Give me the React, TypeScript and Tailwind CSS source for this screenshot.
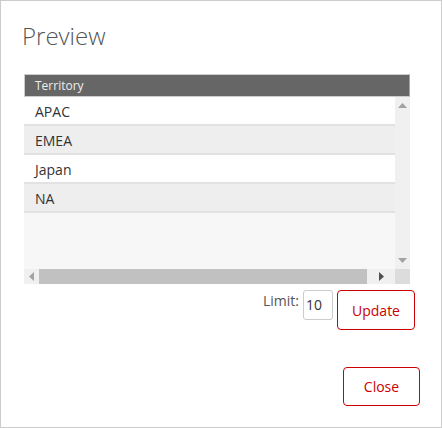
import React from "react";

const rows = ["APAC", "EMEA", "Japan", "NA"];

export default function App() {
  return (
    <div
      className="w-[442px] h-[428px] border border-[#cccccc] bg-white flex flex-col"
      style={{ fontFamily: '"Open Sans", "Liberation Sans", sans-serif' }}
    >
      <div className="pl-[21px] pt-[20px] h-[73px] text-[24px] font-light leading-[30px] text-[#555555]">
        Preview
      </div>
      <div className="ml-[23px] w-[386px] flex flex-col">
        <div className="h-[23px] bg-[#666666] border border-[#cccccc] border-r-[#8fa9c4] pl-[10px] text-[12px] leading-[22px] text-[#eeeeee]">
          Territory
        </div>
        <div className="flex h-[172px]">
          <div className="flex-1 bg-[#f7f7f7] flex flex-col">
            {rows.map((r, i) => (
              <div
                key={r}
                className={`h-[29px] border-b-2 border-[#e2e2e2] pl-[11px] pt-[1px] text-[14px] leading-[27px] text-[#333333] ${
                  i % 2 === 0 ? "bg-white" : "bg-[#eeeeee]"
                }`}
              >
                {r}
              </div>
            ))}
          </div>
          <div className="w-[15px] bg-[#f0f0f0] flex flex-col items-center justify-between py-[6px]">
            <svg width="9" height="5" viewBox="0 0 9 5">
              <polygon points="0,5 9,5 4.5,0" fill="#a3a3a3" />
            </svg>
            <svg width="9" height="5" viewBox="0 0 9 5">
              <polygon points="0,0 9,0 4.5,5" fill="#a3a3a3" />
            </svg>
          </div>
        </div>
        <div className="flex h-[15px]">
          <div className="flex-1 bg-[#f0f0f0] flex items-center">
            <div className="w-[15px] flex justify-center">
              <svg width="5" height="9" viewBox="0 0 5 9">
                <polygon points="5,0 5,9 0,4.5" fill="#a3a3a3" />
              </svg>
            </div>
            <div className="w-[328px] h-[15px] bg-[#c1c1c1]" />
            <div className="flex-1 flex justify-center">
              <svg width="5" height="9" viewBox="0 0 5 9">
                <polygon points="0,0 0,9 5,4.5" fill="#505050" />
              </svg>
            </div>
          </div>
          <div className="w-[15px] bg-[#dcdcdc]" />
        </div>
      </div>
      <div className="flex justify-end items-start pr-[26px] mt-[6px] gap-[4px]">
        <span className="text-[14px] text-[#555555] leading-[20px] mt-[1px]">Limit:</span>
        <div className="w-[30px] h-[30px] border border-[#cccccc] rounded-[3px] text-[14px] text-[#333333] leading-[28px] pl-[2px]">
          10
        </div>
        <button className="w-[78px] h-[40px] border border-[#cc0000] rounded-[4px] text-[14px] text-[#cc0000] bg-white">
          Update
        </button>
      </div>
      <div className="flex justify-end pr-[21px] mt-[37px]">
        <button className="w-[77px] h-[39px] border border-[#cc0000] rounded-[4px] text-[14px] text-[#cc0000] bg-white">
          Close
        </button>
      </div>
    </div>
  );
}
